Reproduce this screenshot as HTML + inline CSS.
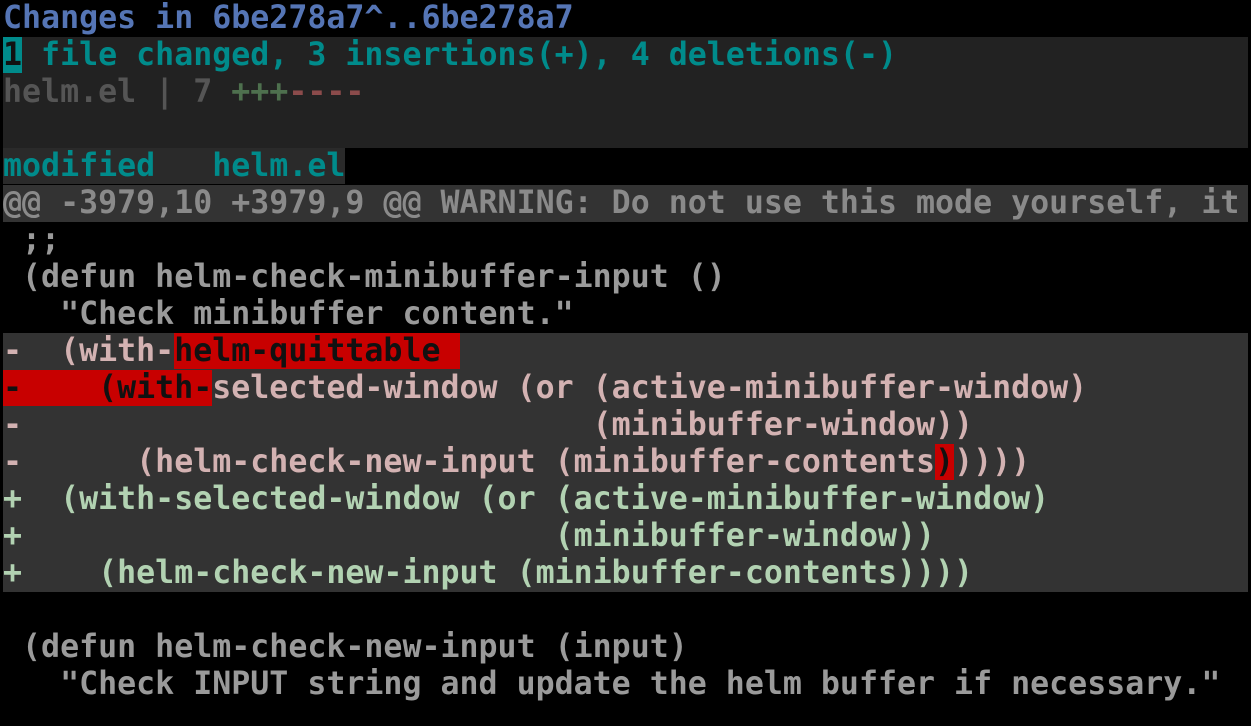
<!DOCTYPE html>
<html><head><meta charset="utf-8"><style>
html,body{margin:0;padding:0;background:#000;width:1251px;height:726px;overflow:hidden}
.w{position:absolute;left:3px;top:0;width:1245px}
.r{height:37px;line-height:37px;white-space:pre;font-family:"DejaVu Sans Mono","Liberation Mono",monospace;font-weight:bold;font-size:31.6px;overflow:hidden;color:#9a9a9a}
.bl{color:#5575b5}.tl{color:#008b8b}
.g2{background:#222}.g3{background:#333}
.del{color:#d3b2b2}.add{color:#b2d2b2}
.rd{background:#c80000;color:#111}
</style></head><body><div class="w">
<div class="r bl">Changes in 6be278a7^..6be278a7</div>
<div class="r g2 tl"><span style="background:#008b8b;color:#111">1</span> file changed, 3 insertions(+), 4 deletions(-)</div>
<div class="r g2" style="color:#555">helm.el | 7 <span style="color:#4e704e">+++</span><span style="color:#8b4b4b">----</span></div>
<div class="r g2"> </div>
<div class="r tl"><span style="background:#2a2a2a">modified   helm.el</span></div>
<div class="r g3" style="color:#8a8a8a">@@ -3979,10 +3979,9 @@ WARNING: Do not use this mode yourself, it</div>
<div class="r"> ;;</div>
<div class="r"> (defun helm-check-minibuffer-input ()</div>
<div class="r">   "Check minibuffer content."</div>
<div class="r g3 del">-  (with-<span class="rd">helm-quittable </span></div>
<div class="r g3 del"><span class="rd">-    (with-</span>selected-window (or (active-minibuffer-window)</div>
<div class="r g3 del">-                              (minibuffer-window))</div>
<div class="r g3 del">-      (helm-check-new-input (minibuffer-contents<span class="rd">)</span>))))</div>
<div class="r g3 add">+  (with-selected-window (or (active-minibuffer-window)</div>
<div class="r g3 add">+                            (minibuffer-window))</div>
<div class="r g3 add">+    (helm-check-new-input (minibuffer-contents))))</div>
<div class="r"> </div>
<div class="r"> (defun helm-check-new-input (input)</div>
<div class="r">   "Check INPUT string and update the helm buffer if necessary."</div>
</div></body></html>
